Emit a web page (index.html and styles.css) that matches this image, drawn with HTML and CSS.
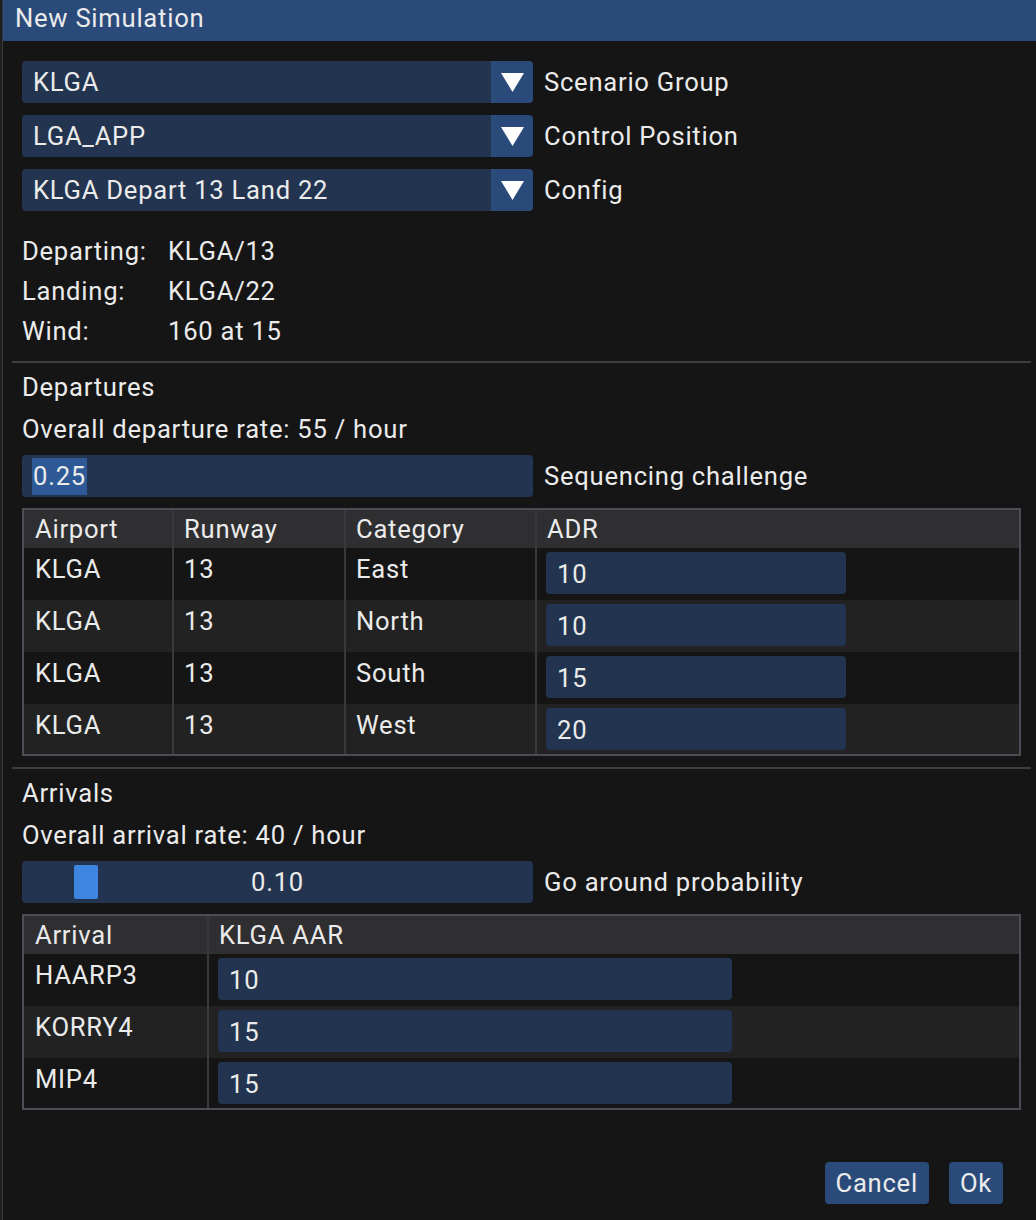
FILE: index.html
```html
<!DOCTYPE html>
<html lang="en">
<head>
<meta charset="utf-8">
<title>New Simulation</title>
<link rel="stylesheet" href="styles.css">
</head>
<body>
<div class="window">
  <div class="titlebar">New Simulation</div>
  <div class="content">
    <div class="combos">
      <div class="field-row">
        <div class="combo"><span class="combo-value">KLGA</span><span class="combo-arrow"><svg width="23" height="19" viewBox="0 0 23 19"><polygon points="0,0 23,0 11.5,19" fill="#ffffff"/></svg></span></div>
        <span class="field-label">Scenario Group</span>
      </div>
      <div class="field-row">
        <div class="combo"><span class="combo-value">LGA_APP</span><span class="combo-arrow"><svg width="23" height="19" viewBox="0 0 23 19"><polygon points="0,0 23,0 11.5,19" fill="#ffffff"/></svg></span></div>
        <span class="field-label">Control Position</span>
      </div>
      <div class="field-row">
        <div class="combo"><span class="combo-value">KLGA Depart 13 Land 22</span><span class="combo-arrow"><svg width="23" height="19" viewBox="0 0 23 19"><polygon points="0,0 23,0 11.5,19" fill="#ffffff"/></svg></span></div>
        <span class="field-label">Config</span>
      </div>
    </div>

    <div class="info">
      <span>Departing:</span><span>KLGA/13</span>
      <span>Landing:</span><span>KLGA/22</span>
      <span>Wind:</span><span>160 at 15</span>
    </div>

    <div class="separator"></div>

    <div class="section-title">Departures</div>
    <div class="rate-line">Overall departure rate: 55 / hour</div>
    <div class="field-row slider-row">
      <div class="frame input-wide"><span class="selected">0.25</span></div>
      <span class="field-label">Sequencing challenge</span>
    </div>

    <div class="table dep-table">
      <div class="trow thead">
        <div class="cell">Airport</div><div class="cell">Runway</div><div class="cell">Category</div><div class="cell">ADR</div>
      </div>
      <div class="trow">
        <div class="cell">KLGA</div><div class="cell">13</div><div class="cell">East</div><div class="cell cell-input"><div class="frame adr-input">10</div></div>
      </div>
      <div class="trow alt">
        <div class="cell">KLGA</div><div class="cell">13</div><div class="cell">North</div><div class="cell cell-input"><div class="frame adr-input">10</div></div>
      </div>
      <div class="trow">
        <div class="cell">KLGA</div><div class="cell">13</div><div class="cell">South</div><div class="cell cell-input"><div class="frame adr-input">15</div></div>
      </div>
      <div class="trow alt last">
        <div class="cell">KLGA</div><div class="cell">13</div><div class="cell">West</div><div class="cell cell-input"><div class="frame adr-input">20</div></div>
      </div>
    </div>

    <div class="separator sep2"></div>

    <div class="section-title">Arrivals</div>
    <div class="rate-line">Overall arrival rate: 40 / hour</div>
    <div class="field-row slider-row">
      <div class="frame input-wide slider"><span class="grab" style="left: 52px"></span><span class="slider-value">0.10</span></div>
      <span class="field-label">Go around probability</span>
    </div>

    <div class="table arr-table">
      <div class="trow thead">
        <div class="cell">Arrival</div><div class="cell">KLGA AAR</div>
      </div>
      <div class="trow">
        <div class="cell">HAARP3</div><div class="cell cell-input"><div class="frame aar-input">10</div></div>
      </div>
      <div class="trow alt">
        <div class="cell">KORRY4</div><div class="cell cell-input"><div class="frame aar-input">15</div></div>
      </div>
      <div class="trow last">
        <div class="cell">MIP4</div><div class="cell cell-input"><div class="frame aar-input">15</div></div>
      </div>
    </div>

    <div class="buttons">
      <div class="button">Cancel</div>
      <div class="button">Ok</div>
    </div>
  </div>
</div>
</body>
</html>
```

FILE: styles.css
```css
html, body {
  margin: 0;
  padding: 0;
  background: #1e1e1e;
}

body {
  font-family: "Roboto", "Noto Sans", "Liberation Sans", sans-serif;
  font-size: 25.6px;
  line-height: 30px;
  letter-spacing: 0.75px;
  color: #ebebeb;
  width: 1036px;
  height: 1220px;
  overflow: hidden;
}

.window {
  margin-left: 2px;
  border-left: 1px solid #3a3a3e;
  background: #151515;
  height: 1220px;
}

.titlebar {
  height: 41px;
  background: #2a4a7a;
  padding-left: 12px;
  line-height: 36px;
  box-sizing: border-box;
}

.content {
  padding: 20px 0 0 19px;
}

.combos {
  display: flex;
  flex-direction: column;
  gap: 12px;
}

.field-row {
  display: flex;
  align-items: center;
  gap: 11px;
}

.combo {
  width: 511px;
  height: 42px;
  display: flex;
  border-radius: 4px;
  overflow: hidden;
}

.combo-value {
  flex: 1;
  background: #22344f;
  padding-left: 11px;
  line-height: 42px;
}

.combo-arrow {
  width: 42px;
  background: #2a4b7a;
  display: flex;
  align-items: center;
  justify-content: center;
}

.combo-arrow svg {
  display: block;
  margin-top: 1px;
}

.info {
  margin-top: 25px;
  display: grid;
  grid-template-columns: 146px auto;
  row-gap: 10px;
  width: 400px;
}

.separator {
  margin-top: 15px;
  margin-left: -10px;
  width: 1019px;
  height: 2px;
  background: #3d3d44;
}

.sep2 {
  margin-top: 11px;
}

.section-title {
  margin-top: 9px;
}

.rate-line {
  margin-top: 12px;
}

.slider-row {
  margin-top: 11px;
}

.frame {
  background: #22344f;
  border-radius: 4px;
  height: 42px;
  box-sizing: border-box;
  padding-left: 11px;
  line-height: 42px;
  position: relative;
}

.input-wide {
  width: 511px;
  display: flex;
  align-items: center;
  padding-left: 10px;
}

.selected {
  display: inline-block;
  background: #2d5a96;
  height: 37px;
  line-height: 37px;
  padding: 0 1px;
}

.slider {
  justify-content: center;
  padding-left: 0;
}

.grab {
  position: absolute;
  top: 4px;
  width: 24px;
  height: 34px;
  background: #3d85e0;
  border-radius: 2px;
}

.slider-value {
  position: relative;
}

.table {
  margin-top: 11px;
  width: 999px;
  border: 2px solid #4c4c55;
  box-sizing: border-box;
}

.trow {
  display: grid;
  height: 52px;
}

.dep-table .trow {
  grid-template-columns: 148px 172px 191px 484px;
}

.arr-table .trow {
  grid-template-columns: 183px 812px;
}

.trow.thead {
  height: 38px;
  background: #2f2f32;
}

.trow.alt {
  background: #222223;
}

.trow.last {
  height: 50px;
}

.cell {
  padding: 6px 0 0 10px;
  box-sizing: border-box;
  white-space: nowrap;
}

.cell:first-child {
  padding-left: 11px;
}

.cell + .cell {
  border-left: 2px solid #38383d;
}

.thead .cell {
  padding-top: 4px;
}

.cell.cell-input {
  padding-top: 4px;
  padding-left: 9px;
}

.adr-input {
  width: 300px;
}

.aar-input {
  width: 514px;
}

.frame.adr-input,
.frame.aar-input {
  line-height: 44px;
}

.buttons {
  margin-top: 52px;
  width: 981px;
  display: flex;
  justify-content: flex-end;
  gap: 20px;
}

.button {
  height: 42px;
  line-height: 43px;
  padding: 0 11px;
  background: #2a4b7a;
  border-radius: 4px;
}
```
